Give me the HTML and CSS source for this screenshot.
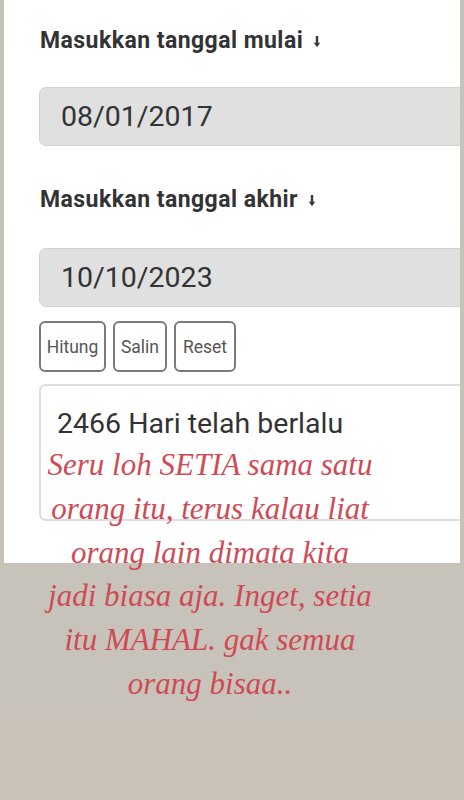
FILE: index.html
```html
<!DOCTYPE html>
<html lang="id">
<head>
<meta charset="utf-8">
<title>Hitung Hari</title>
<link rel="stylesheet" href="styles.css">
</head>
<body>
<div class="stage">
  <main class="panel">
    <section class="field">
      <label class="label">Masukkan tanggal mulai <svg class="arrow" viewBox="0 0 8 12" width="8" height="13"><path d="M4 0.5V8.5" stroke="#3a3a3a" stroke-width="2.4" fill="none"/><path d="M0.8 7.2L4 11.8L7.2 7.2Z" fill="#3a3a3a"/></svg></label>
      <div class="input">08/01/2017</div>
    </section>
    <section class="field second">
      <label class="label">Masukkan tanggal akhir <svg class="arrow" viewBox="0 0 8 12" width="8" height="13"><path d="M4 0.5V8.5" stroke="#3a3a3a" stroke-width="2.4" fill="none"/><path d="M0.8 7.2L4 11.8L7.2 7.2Z" fill="#3a3a3a"/></svg></label>
      <div class="input">10/10/2023</div>
    </section>
    <div class="buttons">
      <button class="btn btn-hitung">Hitung</button>
      <button class="btn btn-salin">Salin</button>
      <button class="btn btn-reset">Reset</button>
    </div>
    <div class="result">2466 Hari telah berlalu</div>
  </main>
  <p class="caption">Seru loh SETIA sama satu<br>orang itu, terus kalau liat<br>orang lain dimata kita<br>jadi biasa aja. Inget, setia<br>itu MAHAL. gak semua<br>orang bisaa..</p>
</div>
</body>
</html>
```

FILE: styles.css
```css
html, body {
  margin: 0;
  padding: 0;
}
body {
  width: 464px;
  height: 800px;
  overflow: hidden;
  background: linear-gradient(#c4c3bb, #c9c3ba);
  font-family: Roboto, "Liberation Sans", sans-serif;
}
.stage {
  position: relative;
  height: 800px;
}
.panel {
  margin: 0 4px;
  height: 563px;
  background: #fff;
  overflow: hidden;
  padding: 25px 0 0 35px;
  box-sizing: border-box;
}
.field {
  display: flex;
  flex-direction: column;
}
.second {
  margin-top: 38px;
}
.label {
  font-weight: 700;
  font-size: 23px;
  line-height: 32px;
  color: #333;
  padding-left: 1px;
  letter-spacing: 0.45px;
}
.arrow {
  margin-left: 4px;
  vertical-align: 0;
}
.input {
  margin-top: 30px;
  height: 59px;
  width: 450px;
  box-sizing: border-box;
  background: #e0e0e0;
  border: 1px solid #d2d2d2;
  border-radius: 7px;
  padding-left: 21px;
  display: flex;
  align-items: center;
  font-size: 28.5px;
  color: #333;
}
.second .input {
  margin-top: 32px;
}
.buttons {
  display: flex;
  gap: 7px;
  margin-top: 14px;
}
.btn {
  height: 51px;
  box-sizing: border-box;
  border: 2px solid #7a7a7a;
  border-radius: 6px;
  background: #fff;
  font-family: Roboto, "Liberation Sans", sans-serif;
  font-size: 17.5px;
  color: #555;
  padding: 0;
}
.btn-hitung { width: 67px; }
.btn-salin { width: 54px; }
.btn-reset { width: 62px; }
.result {
  margin-top: 12px;
  height: 137px;
  width: 450px;
  box-sizing: border-box;
  border: 2px solid #dedede;
  border-radius: 7px;
  padding: 21px 0 0 16px;
  font-size: 28.5px;
  color: #333;
}
.caption {
  position: absolute;
  left: 38px;
  top: 443px;
  width: 344px;
  margin: 0;
  text-align: center;
  font-family: "Liberation Serif", serif;
  font-style: italic;
  font-size: 31px;
  line-height: 43.8px;
  color: #d04a55;
}
```
